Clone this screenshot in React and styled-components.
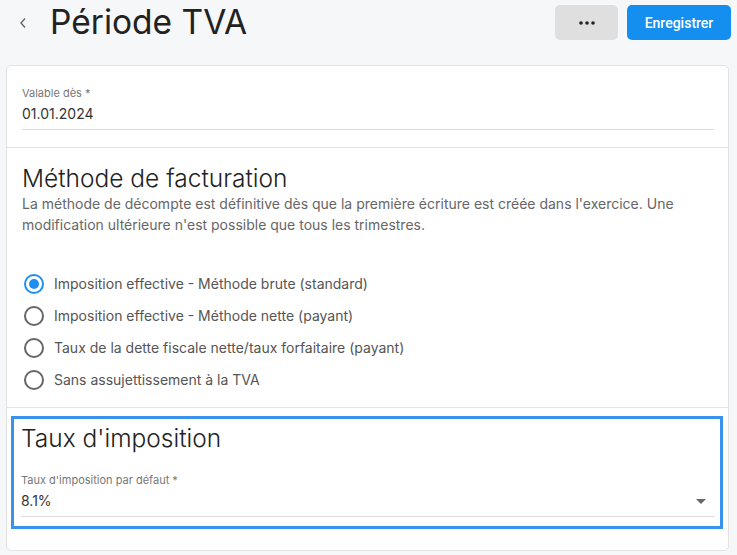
import React, { useState } from "react";
import styled, { createGlobalStyle } from "styled-components";

const GlobalStyle = createGlobalStyle`
  body {
    margin: 0;
    background: #f6f7f8;
    font-family: Inter, "Noto Sans", sans-serif;
    color: #333;
  }
`;

const Page = styled.div`
  width: 737px;
  height: 555px;
  overflow: hidden;
`;

const Header = styled.header`
  display: flex;
  align-items: center;
  height: 45px;
  padding: 0 6px 0 16px;
  margin-bottom: 20px;
`;

const BackButton = styled.button`
  border: 0;
  background: none;
  padding: 0;
  width: 14px;
  height: 24px;
  display: flex;
  align-items: center;
  justify-content: center;
  color: #666;
  cursor: pointer;
  margin-right: 20px;
`;

const Title = styled.h1`
  margin: 0;
  font-size: 33.5px;
  font-weight: 400;
  color: #222;
  flex: 1;
  line-height: 45px;
`;

const Actions = styled.div`
  display: flex;
  gap: 9px;
`;

const ActionButton = styled.button`
  height: 35px;
  border: 0;
  border-radius: 5px;
  font-family: Roboto, "Liberation Sans", sans-serif;
  font-size: 14px;
  font-weight: 500;
  cursor: pointer;
  background: ${p => (p.$primary ? "#148ff0" : "#dfdfdf")};
  color: ${p => (p.$primary ? "#fff" : "#222")};
  width: ${p => (p.$primary ? "104px" : "63px")};
  display: flex;
  align-items: center;
  justify-content: center;
`;

const Card = styled.div`
  margin-left: 6px;
  width: 723px;
  background: #fff;
  border: 1px solid #e2e2e2;
  border-radius: 5px;
  height: 486px;
  box-sizing: border-box;
`;

const Section = styled.section`
  padding: ${p => p.$pad || "20px 14px 17px 15px"};
  border-bottom: ${p => (p.$last ? "0" : "1px solid #e4e4e4")};
`;

const FocusBox = styled.div`
  margin: 8px 5px 0 4px;
  border: 3px solid #3993ee;
  padding: 4px 6px 9px 7px;
`;

const Field = styled.div`
  display: flex;
  flex-direction: column;
  border-bottom: 1px solid #dcdcdc;
  padding-bottom: 5px;
`;

const FieldLabel = styled.label`
  font-size: 11px;
  color: #777;
  line-height: 14px;
  margin-bottom: 4px;
`;

const FieldValue = styled.div`
  display: flex;
  align-items: center;
  justify-content: space-between;
  font-size: 14px;
  color: #333;
  line-height: 20px;
`;

const Caret = styled.span`
  width: 0;
  height: 0;
  border-left: 5px solid transparent;
  border-right: 5px solid transparent;
  border-top: 5px solid #666;
  margin-right: 8px;
`;

const SectionTitle = styled.h2`
  margin: 0 0 ${p => p.$gap || 0}px;
  font-size: 24.5px;
  font-weight: 300;
  color: #222;
  line-height: 30px;
`;

const Description = styled.p`
  margin: 0;
  font-size: 14px;
  color: #666;
  line-height: 21px;
  font-weight: 400;
`;

const RadioList = styled.div`
  display: flex;
  flex-direction: column;
  gap: 12px;
  margin-top: 39px;
`;

const RadioRow = styled.label`
  display: flex;
  align-items: center;
  gap: 10px;
  font-size: 14px;
  color: #555;
  line-height: 20px;
  cursor: pointer;
`;

const RadioCircle = styled.span`
  width: 16px;
  height: 16px;
  border-radius: 50%;
  border: 2px solid ${p => (p.$checked ? "#1e8ff0" : "#666")};
  display: flex;
  align-items: center;
  justify-content: center;
  margin-left: 2px;

  &::after {
    content: "";
    width: 10px;
    height: 10px;
    border-radius: 50%;
    background: #1e8ff0;
    display: ${p => (p.$checked ? "block" : "none")};
  }
`;

const options = [
  "Imposition effective - Méthode brute (standard)",
  "Imposition effective - Méthode nette (payant)",
  "Taux de la dette fiscale nette/taux forfaitaire (payant)",
  "Sans assujettissement à la TVA",
];

export default function App() {
  const [method, setMethod] = useState(0);

  return (
    <Page>
      <GlobalStyle />
      <Header>
        <BackButton aria-label="Retour">
          <svg width="8" height="12" viewBox="0 0 8 12">
            <path d="M6 1.5 L2 6 L6 10.5" fill="none" stroke="#666" strokeWidth="1.4" />
          </svg>
        </BackButton>
        <Title>Période TVA</Title>
        <Actions>
          <ActionButton aria-label="Plus">
            <svg width="16" height="4" viewBox="0 0 16 4">
              <circle cx="2" cy="2" r="1.8" fill="#222" />
              <circle cx="8" cy="2" r="1.8" fill="#222" />
              <circle cx="14" cy="2" r="1.8" fill="#222" />
            </svg>
          </ActionButton>
          <ActionButton $primary>Enregistrer</ActionButton>
        </Actions>
      </Header>

      <Card>
        <Section>
          <Field>
            <FieldLabel>Valable dès *</FieldLabel>
            <FieldValue>01.01.2024</FieldValue>
          </Field>
        </Section>

        <Section $pad="15px 14px 17px 15px">
          <SectionTitle>Méthode de facturation</SectionTitle>
          <Description>
            La méthode de décompte est définitive dès que la première écriture est créée dans l'exercice. Une
            modification ultérieure n'est possible que tous les trimestres.
          </Description>
          <RadioList>
            {options.map((o, i) => (
              <RadioRow key={o} onClick={() => setMethod(i)}>
                <RadioCircle $checked={method === i} />
                {o}
              </RadioRow>
            ))}
          </RadioList>
        </Section>

        <Section $last $pad="0">
          <FocusBox>
            <SectionTitle $gap={20}>Taux d'imposition</SectionTitle>
            <Field>
              <FieldLabel>Taux d'imposition par défaut *</FieldLabel>
              <FieldValue>
                8.1%
                <Caret />
              </FieldValue>
            </Field>
          </FocusBox>
        </Section>
      </Card>
    </Page>
  );
}
